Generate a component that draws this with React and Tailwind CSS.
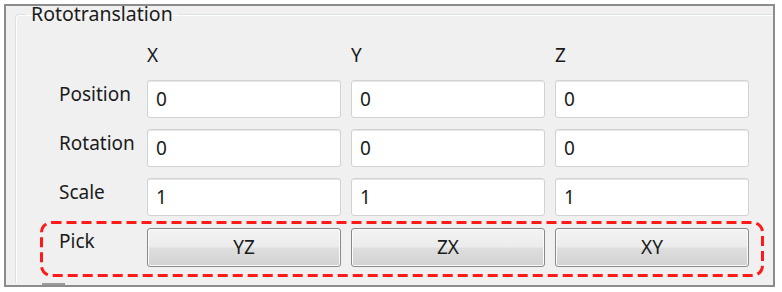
import React from "react";

const cols = ["X", "Y", "Z"];
const rows = [
  { label: "Position", values: ["0", "0", "0"] },
  { label: "Rotation", values: ["0", "0", "0"] },
  { label: "Scale", values: ["1", "1", "1"] },
];

function Field({ value }) {
  return (
    <div className="h-[38px] rounded-[3px] border border-[#cfd3d6] bg-white shadow-[inset_0_1px_0_#e6e6e6] flex items-center pl-[8px] text-[19px] text-[#1b1b1b]">
      {value}
    </div>
  );
}

function PickButton({ children }) {
  return (
    <button className="mt-[1px] h-[39px] rounded-[3px] border border-[#8a8a8a] bg-[linear-gradient(#f3f3f3_0%,#ececec_48%,#dedede_52%,#d2d2d2_100%)] shadow-[inset_0_0_0_1px_#fbfbfb] text-[19px] text-[#1b1b1b]">
      {children}
    </button>
  );
}

export default function App() {
  return (
    <div className="w-[782px] h-[292px] bg-white pt-[4px] pl-[4px] font-['Noto_Sans','Open_Sans',sans-serif]">
      {/* outer frame */}
      <div className="relative w-[771px] h-[283px] border-2 border-[#8c8c8c] bg-[#f0f0f0]">
        {/* group box, runs past the frame on the right and bottom */}
        <fieldset className="ml-[9px] mt-[-3px] w-[758px] h-[280px] rounded-tl-[4px] border border-r-0 border-b-0 border-[#d9e1e5] shadow-[inset_1px_1px_0_#ffffff]">
          <legend className="ml-[10px] px-[5px] text-[19.5px] leading-[22px] text-[#1b1b1b]">
            Rototranslation
          </legend>

          <div className="grid grid-cols-[78px_194px_194px_194px] gap-x-[10px] gap-y-[11px] pt-[22px] pl-[43px]">
            <div />
            {cols.map((c) => (
              <div key={c} className="text-[19px] leading-[24px] text-[#1b1b1b] -mt-[4px] mb-[2px]">
                {c}
              </div>
            ))}

            {rows.map((r) => (
              <React.Fragment key={r.label}>
                <div className="text-[19px] leading-[24px] text-[#1b1b1b] pt-[2px]">{r.label}</div>
                {r.values.map((v, i) => (
                  <Field key={i} value={v} />
                ))}
              </React.Fragment>
            ))}

            <div className="text-[19px] leading-[24px] text-[#1b1b1b] pt-[2px]">Pick</div>
            <PickButton>YZ</PickButton>
            <PickButton>ZX</PickButton>
            <PickButton>XY</PickButton>
          </div>
        </fieldset>

        {/* annotation */}
        <svg className="absolute left-[34px] top-[215px]" width="724" height="56">
          <rect
            x="1.5"
            y="1.5"
            width="721"
            height="53"
            rx="10"
            fill="none"
            stroke="#ff1a1a"
            strokeWidth="3"
            strokeDasharray="10 5"
          />
        </svg>

        {/* small tab at bottom */}
        <div className="absolute left-[36px] bottom-0 w-[23px] h-[2px] bg-[#9a9a9a]" />
      </div>
    </div>
  );
}
